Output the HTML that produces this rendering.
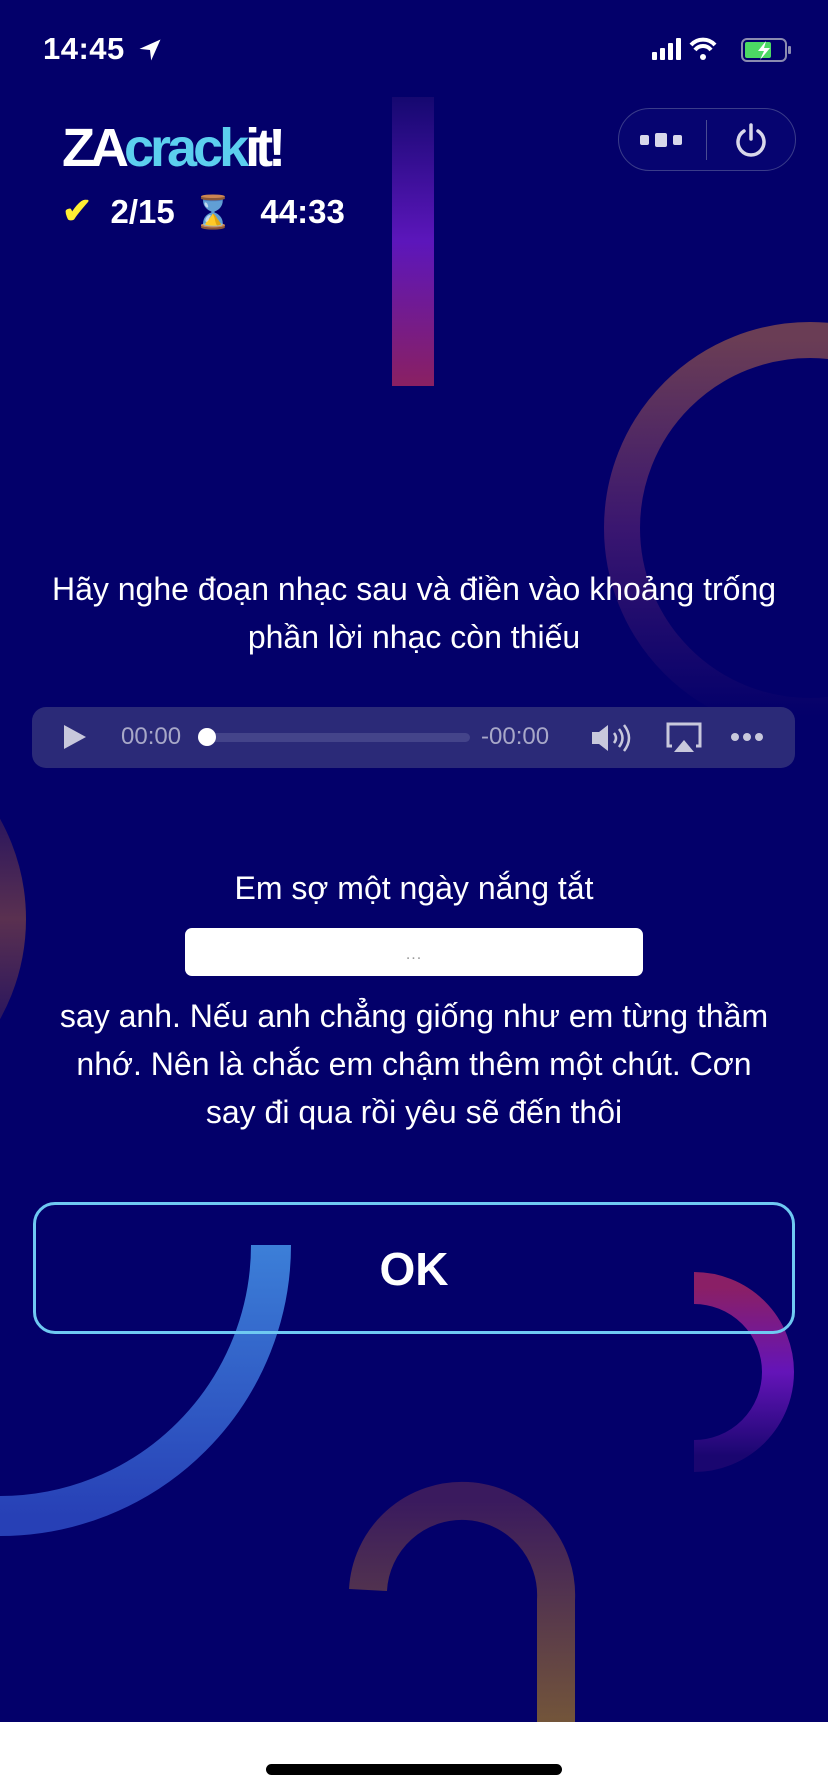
<!DOCTYPE html>
<html><head><meta charset="utf-8"><style>
*{margin:0;padding:0;box-sizing:border-box}
body{width:828px;height:1792px;overflow:hidden;background:#fff;font-family:"Liberation Sans",sans-serif;position:relative}
#bg{position:absolute;left:0;top:0;width:828px;height:1722px;background:#03006a;overflow:hidden}
.abs{position:absolute}
.c{text-align:center;color:#fff;left:0;width:828px}
</style></head><body>
<div id="bg">
<svg class="abs" style="left:0;top:0" width="828" height="1722">
<defs>
<linearGradient id="vb" x1="0" y1="0" x2="0" y2="1"><stop offset="0" stop-color="#150870"/><stop offset="0.5" stop-color="#5c16bb"/><stop offset="1" stop-color="#8a2062"/></linearGradient>
<linearGradient id="rr" x1="0" y1="0" x2="0" y2="1"><stop offset="0" stop-color="#6a3d55"/><stop offset="0.5" stop-color="#3a1670"/><stop offset="1" stop-color="#03006a"/></linearGradient>
<linearGradient id="bl" x1="0" y1="0" x2="0" y2="1"><stop offset="0" stop-color="#3c7fd8"/><stop offset="1" stop-color="#2740b6"/></linearGradient>
<linearGradient id="sr" x1="0" y1="0" x2="0" y2="1"><stop offset="0" stop-color="#8a1f66"/><stop offset="0.5" stop-color="#6414b8"/><stop offset="1" stop-color="#1a0670"/></linearGradient>
<linearGradient id="ar" x1="0" y1="0" x2="0" y2="1"><stop offset="0" stop-color="#3a1a5e"/><stop offset="1" stop-color="#73553a"/></linearGradient>
<linearGradient id="la" x1="0" y1="0" x2="0" y2="1"><stop offset="0" stop-color="#03006a"/><stop offset="0.5" stop-color="#5a3050"/><stop offset="1" stop-color="#03006a"/></linearGradient>
</defs>
<rect x="392" y="97" width="42" height="289" fill="url(#vb)"/>
<circle cx="810" cy="528" r="188" fill="none" stroke="url(#rr)" stroke-width="36"/>
<circle cx="-180" cy="919" r="188" fill="none" stroke="url(#la)" stroke-width="36"/>
<path d="M271 1245 A271 271 0 0 1 0 1516" fill="none" stroke="url(#bl)" stroke-width="40"/>
<path d="M694 1288 A84 84 0 0 1 694 1456" fill="none" stroke="url(#sr)" stroke-width="32"/>
<path d="M368 1590 A94 94 0 0 1 556 1600 L556 1722" fill="none" stroke="url(#ar)" stroke-width="38"/>
</svg>
</div>

<!-- status bar -->
<div class="abs" style="left:43px;top:31px;color:#fff;font-size:31px;font-weight:bold;letter-spacing:0.5px">14:45</div>
<svg class="abs" style="left:136px;top:36px" width="28" height="28" viewBox="0 0 24 24"><path d="M21 3 L3 11 L12 12 L13 21 Z" fill="#fff"/></svg>
<svg class="abs" style="left:652px;top:36px" width="140" height="28">
<rect x="0" y="16" width="5" height="8" rx="1" fill="#fff"/><rect x="8" y="12" width="5" height="12" rx="1" fill="#fff"/><rect x="16" y="7" width="5" height="17" rx="1" fill="#fff"/><rect x="24" y="2" width="5" height="22" rx="1" fill="#fff"/>
<path d="M39 9 A16 16 0 0 1 63 9" stroke="#fff" stroke-width="4" fill="none"/><path d="M43 14 A10 10 0 0 1 59 14" stroke="#fff" stroke-width="4" fill="none"/><circle cx="51" cy="21" r="3" fill="#fff"/>
<rect x="90" y="3" width="44" height="22" rx="5" fill="none" stroke="#8b8bb0" stroke-width="2"/><rect x="93" y="6" width="26" height="16" rx="2" fill="#4cd964"/><rect x="136" y="10" width="3" height="8" rx="1" fill="#8b8bb0"/>
<path d="M114 5 L106 15 L112 15 L108 24 L118 12 L112 12 Z" fill="#fff"/>
</svg>

<!-- logo -->
<div class="abs" style="left:62px;top:120px;font-size:54px;font-weight:bold;letter-spacing:-5px;line-height:56px;white-space:nowrap"><span style="color:#fff">ZA</span><span style="color:#5ccfee;letter-spacing:-4px">crack</span><span style="color:#fff">it!</span></div>
<div class="abs" style="left:62px;top:190px;color:#fff;font-size:33px;font-weight:bold;line-height:42px;white-space:nowrap"><span style="color:#ffee33;font-size:36px">✔</span>&nbsp; 2/15&nbsp; <span style="font-size:32px">⌛</span>&nbsp;&nbsp; 44:33</div>

<!-- capsule -->
<div class="abs" style="left:618px;top:108px;width:178px;height:63px;border:1px solid #3a3c8a;border-radius:32px;background:#060470"></div>
<div class="abs" style="left:640px;top:135px;width:9px;height:10px;background:#d8d8ea;border-radius:2px"></div>
<div class="abs" style="left:655px;top:133px;width:12px;height:14px;background:#d8d8ea;border-radius:2px"></div>
<div class="abs" style="left:673px;top:135px;width:9px;height:10px;background:#d8d8ea;border-radius:2px"></div>
<div class="abs" style="left:706px;top:120px;width:1px;height:40px;background:#4a4c92"></div>
<svg class="abs" style="left:733px;top:122px" width="36" height="36" viewBox="0 0 36 36"><path d="M11 9 A13 13 0 1 0 25 9" fill="none" stroke="#d8d8ea" stroke-width="3.5" stroke-linecap="round"/><line x1="18" y1="3" x2="18" y2="17" stroke="#d8d8ea" stroke-width="3.5" stroke-linecap="round"/></svg>

<!-- question -->
<div class="abs c" style="top:565px;font-size:32px;line-height:48px">Hãy nghe đoạn nhạc sau và điền vào khoảng trống<br>phần lời nhạc còn thiếu</div>

<!-- audio -->
<div class="abs" style="left:32px;top:707px;width:763px;height:61px;border-radius:14px;background:#2b2a78"></div>
<svg class="abs" style="left:62px;top:723px" width="26" height="28"><path d="M2 2 L24 14 L2 26 Z" fill="#c8c8dc"/></svg>
<div class="abs" style="left:121px;top:723px;color:#a8a8c8;font-size:24px">00:00</div>
<div class="abs" style="left:204px;top:733px;width:266px;height:9px;border-radius:5px;background:#44448a"></div>
<div class="abs" style="left:198px;top:728px;width:18px;height:18px;border-radius:9px;background:#fff"></div>
<div class="abs" style="left:481px;top:723px;color:#a8a8c8;font-size:24px">-00:00</div>
<svg class="abs" style="left:590px;top:722px" width="48" height="32"><path d="M2 10 H9 L18 3 V29 L9 22 H2 Z" fill="#c8c8dc"/><path d="M24 11 Q28 16 24 21 M29 7 Q36 16 29 25 M34 3 Q44 16 34 29" stroke="#c8c8dc" stroke-width="2.5" fill="none"/></svg>
<svg class="abs" style="left:666px;top:722px" width="36" height="32"><path d="M6 24 H2 V2 H34 V24 H30" stroke="#c8c8dc" stroke-width="3" fill="none"/><path d="M8 30 L18 18 L28 30 Z" fill="#c8c8dc"/></svg>
<svg class="abs" style="left:730px;top:731px" width="34" height="12"><circle cx="5" cy="6" r="4" fill="#c8c8dc"/><circle cx="17" cy="6" r="4" fill="#c8c8dc"/><circle cx="29" cy="6" r="4" fill="#c8c8dc"/></svg>

<!-- lyrics -->
<div class="abs c" style="top:866px;font-size:32px;line-height:44px">Em sợ một ngày nắng tắt</div>
<div class="abs" style="left:185px;top:928px;width:458px;height:48px;background:#fff;border-radius:7px"></div>
<div class="abs c" style="top:946px;font-size:16px;color:#999;letter-spacing:1px">...</div>
<div class="abs c" style="top:992px;font-size:32px;line-height:48px">say anh. Nếu anh chẳng giống như em từng thầm<br>nhớ. Nên là chắc em chậm thêm một chút. Cơn<br>say đi qua rồi yêu sẽ đến thôi</div>

<!-- OK -->
<div class="abs" style="left:33px;top:1202px;width:762px;height:132px;border:3px solid #6fc9f2;border-radius:22px"></div>
<div class="abs c" style="top:1244px;font-size:46px;font-weight:bold;line-height:50px">OK</div>

<div class="abs" style="left:266px;top:1764px;width:296px;height:11px;border-radius:6px;background:#000"></div>
</body></html>
